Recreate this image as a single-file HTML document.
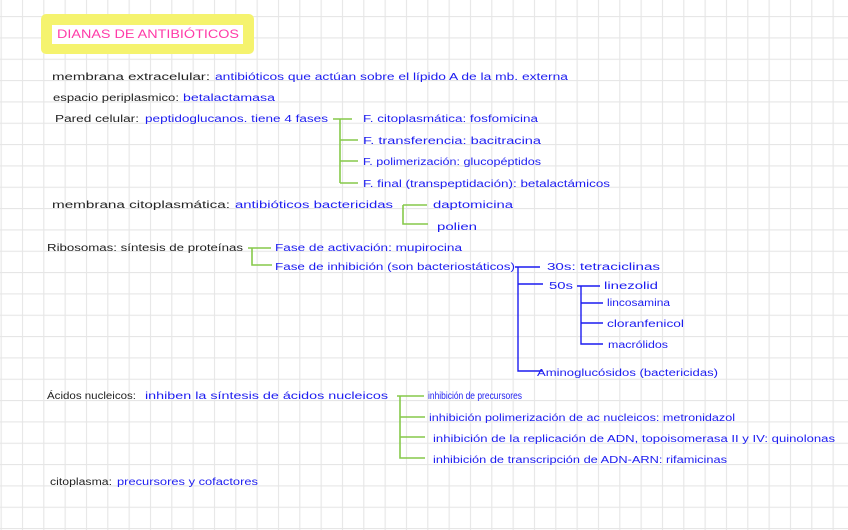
<!DOCTYPE html>
<html><head><meta charset="utf-8"><style>
html,body{margin:0;padding:0;background:#fff;}
svg{display:block;}
text{font-family:"Liberation Sans",sans-serif;font-size:10px;}
.k{fill:#222;}
.b{fill:#1c1cf0;}
.g{stroke:#86c94a;stroke-width:1.6;fill:none;}
.bl{stroke:#1c1cf0;stroke-width:1.4;fill:none;}
</style></head><body>
<svg width="848" height="530" viewBox="0 0 848 530" xmlns="http://www.w3.org/2000/svg">
<defs>
<pattern id="grid" x="0.6" y="-5.3" width="21.333" height="21.333" patternUnits="userSpaceOnUse">
<path d="M0 0V21.333M0 0H21.333" stroke="#e6e6e6" stroke-width="2.2" fill="none"/>
</pattern>
</defs>
<rect width="848" height="530" fill="#fff"/>
<rect width="848" height="530" fill="url(#grid)"/>

<rect x="41" y="14" width="213" height="40" rx="5" fill="#f5f36e"/>
<rect x="52" y="25" width="191" height="19" fill="#fff"/>
<text x="57" y="38" style="fill:#ff3aa8;font-size:12px" textLength="182" lengthAdjust="spacingAndGlyphs">DIANAS DE ANTIBIÓTICOS</text>

<text class="k" x="52" y="80" textLength="158" lengthAdjust="spacingAndGlyphs">membrana extracelular:</text>
<text class="b" x="215" y="80" textLength="353" lengthAdjust="spacingAndGlyphs">antibióticos que actúan sobre el lípido A de la mb. externa</text>

<text class="k" x="53" y="101" textLength="126" lengthAdjust="spacingAndGlyphs">espacio periplasmico:</text>
<text class="b" x="183" y="101" textLength="92" lengthAdjust="spacingAndGlyphs">betalactamasa</text>

<text class="k" x="55" y="122" textLength="84" lengthAdjust="spacingAndGlyphs">Pared celular:</text>
<text class="b" x="145" y="122" textLength="183" lengthAdjust="spacingAndGlyphs">peptidoglucanos. tiene 4 fases</text>
<path class="g" d="M333 119H352M340 119V183M340 140H358M340 161H358M340 183H358"/>
<text class="b" x="363" y="122" textLength="175" lengthAdjust="spacingAndGlyphs">F. citoplasmática: fosfomicina</text>
<text class="b" x="363" y="144" textLength="178" lengthAdjust="spacingAndGlyphs">F. transferencia: bacitracina</text>
<text class="b" x="363" y="165" textLength="178" lengthAdjust="spacingAndGlyphs">F. polimerización: glucopéptidos</text>
<text class="b" x="363" y="187" textLength="247" lengthAdjust="spacingAndGlyphs">F. final (transpeptidación): betalactámicos</text>

<text class="k" x="52" y="208" textLength="178" lengthAdjust="spacingAndGlyphs">membrana citoplasmática:</text>
<text class="b" x="235" y="208" textLength="158" lengthAdjust="spacingAndGlyphs">antibióticos bactericidas</text>
<path class="g" d="M403 205H427M403 205V224H428"/>
<text class="b" x="433" y="208" textLength="80" lengthAdjust="spacingAndGlyphs">daptomicina</text>
<text class="b" x="437" y="230" textLength="40" lengthAdjust="spacingAndGlyphs">polien</text>

<text class="k" x="47" y="251" textLength="196" lengthAdjust="spacingAndGlyphs">Ribosomas: síntesis de proteínas</text>
<path class="g" d="M248 248H271M252 248V265H272"/>
<text class="b" x="275" y="251" textLength="187" lengthAdjust="spacingAndGlyphs">Fase de activación: mupirocina</text>
<text class="b" x="275" y="270" textLength="240" lengthAdjust="spacingAndGlyphs">Fase de inhibición (son bacteriostáticos)</text>
<path class="bl" d="M515 267H540M518 267V371H542M518 284H543"/>
<text class="b" x="547" y="270" textLength="113" lengthAdjust="spacingAndGlyphs">30s: tetraciclinas</text>
<text class="b" x="549" y="289" textLength="24" lengthAdjust="spacingAndGlyphs">50s</text>
<path class="bl" d="M577 286H600M581 286V344H603M581 303H603M581 323H603"/>
<text class="b" x="604" y="289" textLength="54" lengthAdjust="spacingAndGlyphs">linezolid</text>
<text class="b" x="607" y="306" textLength="63" lengthAdjust="spacingAndGlyphs">lincosamina</text>
<text class="b" x="607" y="327" textLength="77" lengthAdjust="spacingAndGlyphs">cloranfenicol</text>
<text class="b" x="608" y="348" textLength="60" lengthAdjust="spacingAndGlyphs">macrólidos</text>
<text class="b" x="537" y="376" textLength="181" lengthAdjust="spacingAndGlyphs">Aminoglucósidos (bactericidas)</text>

<text class="k" x="47" y="399" textLength="89" lengthAdjust="spacingAndGlyphs">Ácidos nucleicos:</text>
<text class="b" x="145" y="399" textLength="243" lengthAdjust="spacingAndGlyphs">inhiben la síntesis de ácidos nucleicos</text>
<path class="g" d="M397 396H424M400 396V458H425M400 417H425M400 437H425"/>
<text class="b" x="428" y="399" textLength="94" lengthAdjust="spacingAndGlyphs">inhibición de precursores</text>
<text class="b" x="429" y="421" textLength="306" lengthAdjust="spacingAndGlyphs">inhibición polimerización de ac nucleicos: metronidazol</text>
<text class="b" x="433" y="442" textLength="402" lengthAdjust="spacingAndGlyphs">inhibición de la replicación de ADN, topoisomerasa II y IV: quinolonas</text>
<text class="b" x="433" y="463" textLength="294" lengthAdjust="spacingAndGlyphs">inhibición de transcripción de ADN-ARN: rifamicinas</text>

<text class="k" x="50" y="485" textLength="62" lengthAdjust="spacingAndGlyphs">citoplasma:</text>
<text class="b" x="117" y="485" textLength="141" lengthAdjust="spacingAndGlyphs">precursores y cofactores</text>
</svg>
</body></html>
